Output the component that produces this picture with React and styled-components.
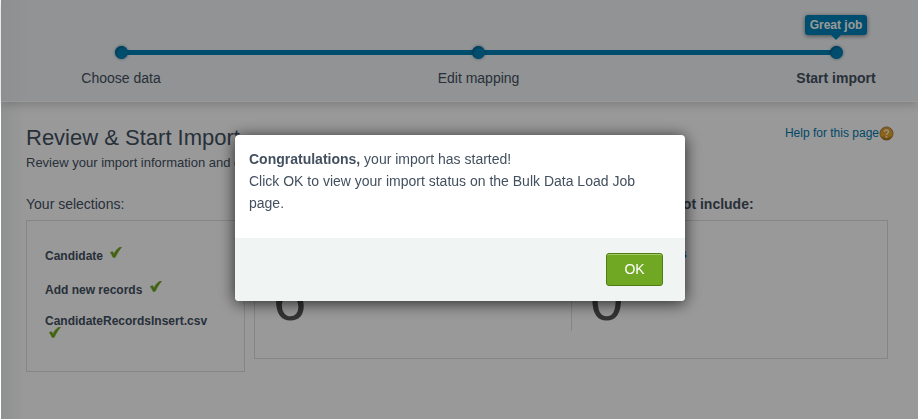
import React from 'react';
import styled, { createGlobalStyle } from 'styled-components';

const GlobalStyle = createGlobalStyle`
  * {
    box-sizing: border-box;
  }
  body {
    margin: 0;
    padding-left: 1px;
    background: #fff;
    color: #43505f;
    font-family: Arial, "Liberation Sans", sans-serif;
    font-size: 14px;
  }
  h1, h2, p, ol, ul {
    margin: 0;
    padding: 0;
    font-weight: normal;
  }
  ol, ul {
    list-style: none;
  }
`

const Page = styled.div`
  min-height: 100vh;
  background: linear-gradient(to right, #eff3f3, #fff 24px);
`

const Header = styled.header`
  padding: 15px 41px 14px 79px;
  background: linear-gradient(to right, #ecf0f2, #f2f5f8 28px);
  border-bottom: 1px solid #fff;
  box-shadow: 0 2px 10px rgba(0, 0, 0, 0.2);
`

const Steps = styled.ol`
  display: flex;
  justify-content: space-between;
`

const Step = styled.li`
  display: flex;
  flex-direction: column;
  align-items: center;
  width: 82px;
  line-height: 18px;
  white-space: nowrap;
  font-weight: ${(props) => (props.$current ? 'bold' : 'normal')};
`

const TipSlot = styled.div`
  height: 30px;
  margin-bottom: 1px;
`

const Tip = styled.div`
  position: relative;
  padding: 0 5px;
  border-radius: 3px;
  background: #0083b9;
  box-shadow: 0 1px 4px rgba(0, 0, 0, 0.5);
  color: #fff;
  font-size: 12px;
  font-weight: bold;
  line-height: 20px;

  &::after {
    content: '';
    position: absolute;
    top: 100%;
    left: 50%;
    margin-left: -5px;
    border: 5px solid transparent;
    border-top-color: #0083b9;
    border-bottom: 0;
  }
`

const Dot = styled.div`
  width: 13px;
  height: 13px;
  margin-bottom: 10px;
  border-radius: 50%;
  background: #0081b7;
  box-shadow: 0 0 3px rgba(0, 80, 120, 0.6), inset 1px 1px 2px rgba(0, 40, 60, 0.4);
`

/* runs through the middle of the dots */
const Track = styled.div`
  height: 5px;
  margin: -37px 41px 32px;
  background: #0081b7;
`

const Content = styled.main`
  padding: 23px 30px 40px 25px;
`

const TitleRow = styled.div`
  display: flex;
  justify-content: space-between;
  align-items: flex-start;
`

const Title = styled.h1`
  font-size: 22px;
  line-height: 26px;
`

const Subtitle = styled.p`
  font-size: 13px;
  line-height: 24px;
`

const HelpLink = styled.a`
  display: flex;
  align-items: center;
  margin-right: -6px;
  color: #0079ad;
  font-size: 12px;
  line-height: 16px;
  text-decoration: none;
`

const Columns = styled.div`
  display: flex;
  align-items: flex-start;
  gap: 9px;
  margin-top: 20px;
`

const Selections = styled.section`
  flex: 0 0 219px;
`

const Summary = styled.section`
  flex: 1;
`

const Labels = styled.div`
  display: grid;
  grid-template-columns: 1fr 1fr;
  column-gap: 10px;
`

const Label = styled.h2`
  padding-bottom: 7px;
  font-size: 14px;
  line-height: 18px;
  white-space: nowrap;
`

const SelectionList = styled.ul`
  display: flex;
  flex-direction: column;
  gap: 19px;
  min-height: 152px;
  padding: 26px 28px 24px 18px;
  border: 1px solid #dcdfe0;
  font-size: 12px;
  font-weight: bold;
  line-height: 12px;

  svg {
    margin-left: 4px;
    vertical-align: 2px;
  }
`

const Totals = styled.div`
  display: grid;
  grid-template-columns: 1fr 1fr;
  padding: 26px 0 27px;
  border: 1px solid #dcdfe0;
`

const Total = styled.div`
  height: 84px;
  padding-left: 18px;

  & + & {
    border-left: 1px solid #dcdfe0;
  }
`

const FieldsLink = styled.a`
  display: block;
  color: #0070a2;
  font-size: 12px;
  font-weight: bold;
  line-height: 14px;
  text-decoration: none;
`

const Count = styled.div`
  color: #555;
  font-size: 60px;
  line-height: 78px;
`

const Overlay = styled.div`
  position: fixed;
  inset: 0 0 0 1px;
  display: flex;
  justify-content: center;
  align-items: flex-start;
  padding: 135px 0 0 1px;
  background: rgba(0, 0, 0, 0.4);
`

const Dialog = styled.div`
  width: 450px;
  max-width: 100%;
  border-radius: 4px;
  overflow: hidden;
  background: #fff;
  box-shadow: 0 2px 16px rgba(0, 0, 0, 0.75);
`

const Message = styled.div`
  padding: 13px 14px 24px;
  line-height: 22px;
`

const Actions = styled.div`
  display: flex;
  justify-content: flex-end;
  padding: 15px 22px;
  background: #f0f4f3;
`

const OkButton = styled.button`
  width: 57px;
  height: 33px;
  padding: 0 0 2px;
  border: 1px solid #4f7c13;
  border-radius: 3px;
  background: #71a823;
  box-shadow: inset 0 1px 0 #a4cb66;
  color: #fff;
  font: 14px Arial, "Liberation Sans", sans-serif;
  cursor: pointer;
`

const Check = () => (
  <svg width="12" height="11" viewBox="0 0 12 11" aria-hidden="true">
    <path d="M.3 5.6 2.4 4.6 4.1 6.9C5.4 4 7.4 1.5 9.7.3L11.6.2C9 3.2 6.9 6.6 5.3 10.2L3.2 10.6C2.4 8.7 1.5 7 .3 5.6Z" fill="#70a520" stroke="#70a520" strokeWidth="0.6" strokeLinejoin="round" />
  </svg>
)

const HelpIcon = () => (
  <svg width="15" height="15" viewBox="0 0 15 15" aria-hidden="true">
    <defs>
      <linearGradient id="gold" x1="0" y1="0" x2="0" y2="1">
        <stop offset="0" stopColor="#d99a3a" />
        <stop offset="0.65" stopColor="#eaa92c" />
        <stop offset="1" stopColor="#a06510" />
      </linearGradient>
    </defs>
    <circle cx="7.5" cy="7.5" r="6.6" fill="url(#gold)" stroke="#9a6a20" strokeWidth="0.7" />
    <path d="M5.4 5.8C5.6 3.4 9.6 3.5 9.5 5.8C9.4 7.3 7.5 7.2 7.5 8.9" fill="none" stroke="#fff3d0" strokeWidth="1.5" />
    <circle cx="7.5" cy="11" r="1" fill="#fff3d0" />
  </svg>
)

const steps = ['Choose data', 'Edit mapping', 'Start import'];
const selections = ['Candidate', 'Add new records', 'CandidateRecordsInsert.csv'];

export default function App() {
  const [open, setOpen] = React.useState(true);
  return (
    <>
      <GlobalStyle />
      <Page>
        <Header>
          <Steps>
            {steps.map((step, i) => (
              <Step key={step} $current={i === 2}>
                <TipSlot>{i === 2 && <Tip>Great job</Tip>}</TipSlot>
                <Dot />
                {step}
              </Step>
            ))}
          </Steps>
          <Track />
        </Header>
        <Content>
          <TitleRow>
            <div>
              <Title>Review &amp; Start Import</Title>
              <Subtitle>Review your import information and click Start Import.</Subtitle>
            </div>
            <HelpLink href="#help">
              Help for this page
              <HelpIcon />
            </HelpLink>
          </TitleRow>
          <Columns>
            <Selections>
              <Label>Your selections:</Label>
              <SelectionList>
                {selections.map((item) => (
                  <li key={item}>
                    {item} <Check />
                  </li>
                ))}
              </SelectionList>
            </Selections>
            <Summary>
              <Labels>
                <Label>Your import will <b>include:</b></Label>
                <Label>Your import will <b>not include:</b></Label>
              </Labels>
              <Totals>
                <Total>
                  <FieldsLink href="#mapped">Mapped fields</FieldsLink>
                  <Count>6</Count>
                </Total>
                <Total>
                  <FieldsLink href="#unmapped">Unmapped fields</FieldsLink>
                  <Count>0</Count>
                </Total>
              </Totals>
            </Summary>
          </Columns>
        </Content>
      </Page>
      {open && (
        <Overlay>
          <Dialog role="dialog" aria-modal="true">
            <Message>
              <p><strong>Congratulations,</strong> your import has started!</p>
              <p>Click OK to view your import status on the Bulk Data Load Job page.</p>
            </Message>
            <Actions>
              <OkButton onClick={() => setOpen(false)}>OK</OkButton>
            </Actions>
          </Dialog>
        </Overlay>
      )}
    </>
  );
}
